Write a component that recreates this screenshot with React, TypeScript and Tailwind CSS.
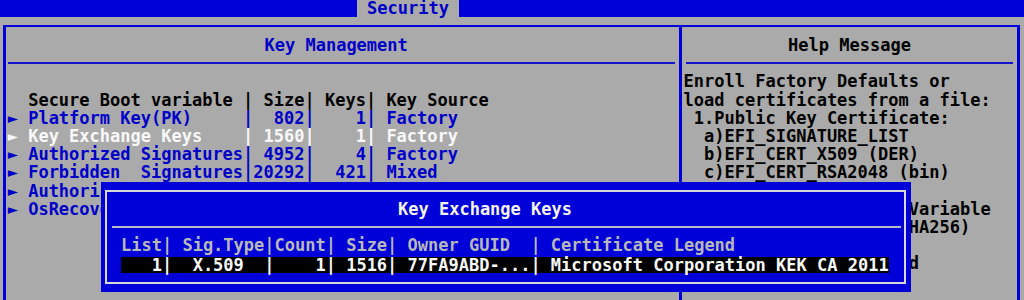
const keyRows = [
  { name: 'Platform Key(PK)', size: '802', keys: '1', source: 'Factory' },
  { name: 'Key Exchange Keys', size: '1560', keys: '1', source: 'Factory', selected: true },
  { name: 'Authorized Signatures', size: '4952', keys: '4', source: 'Factory' },
  { name: 'Forbidden  Signatures', size: '20292', keys: '421', source: 'Mixed' },
  { name: 'Authorized TimeStamps', size: '0', keys: '0', source: 'No Keys' },
  { name: 'OsRecovery Signatures', size: '0', keys: '0', source: 'No Keys' },
];

const helpLines = [
  'Enroll Factory Defaults or',
  'load certificates from a file:',
  ' 1.Public Key Certificate:',
  '  a)EFI_SIGNATURE_LIST',
  '  b)EFI_CERT_X509 (DER)',
  '  c)EFI_CERT_RSA2048 (bin)',
  '  d)EFI_CERT_SHA256',
  ' 2.Authenticated UEFI Variable',
  ' 3.EFI PE/COFF Image(SHA256)',
  'Key Source:',
  ' Factory,Mixed,Modified',
];

function Underline({ className }: { className: string }) {
  return (
    <div className="flex h-[18.2px] items-center">
      <div className={`h-[2px] flex-1 bg-[#1414cc] ${className}`} />
    </div>
  );
}

export default function App() {
  return (
    <div className="relative h-[300px] w-[1024px] overflow-hidden bg-[#aaaaaa] font-['DejaVu_Sans_Mono',monospace] text-[17px] font-bold leading-[18.2px]">
      {/* Menu bar */}
      <div className="flex h-[17px] bg-[#0000d8]">
        <div className="ml-[357px] flex w-[102px] items-center justify-center bg-[#aaaaaa] leading-[17px] text-[#0000c8]">
          Security
        </div>
      </div>

      {/* Main frame */}
      <div className="mt-[8px] ml-[3px] mr-[4px] flex h-[290px] border-x-[3px] border-t-2 border-[#0000d8]">
        {/* Key Management */}
        <div className="w-[673px] pt-[9px]">
          <div className="pl-[258.5px] text-[#0000c8]">Key Management</div>
          <Underline className="ml-[2px] mr-[4px]" />
          <div className="h-[18.2px]" />
          <div className="whitespace-pre pl-[1.7px]">
            <div className="text-black">{'  Secure Boot variable | Size| Keys| Key Source'}</div>
            {keyRows.map((r) => (
              <div key={r.name} className={r.selected ? 'text-[#f8f8f8]' : 'text-[#0000c8]'}>
                {'\u25BA ' + r.name.padEnd(21) + '|' + r.size.padStart(5) + '|' + r.keys.padStart(5) + '| ' + r.source}
              </div>
            ))}
          </div>
        </div>

        {/* Help Message */}
        <div className="flex-1 border-l-[3px] border-[#0000d8] pt-[9px]">
          <div className="text-center text-black">Help Message</div>
          <Underline className="ml-[4px] mr-[4px]" />
          <div className="whitespace-pre pl-[1.6px] text-black">
            {helpLines.map((l, i) => (
              <div key={i}>{l}</div>
            ))}
          </div>
        </div>
      </div>

      {/* Popup */}
      <div className="absolute left-[101px] top-[182px] h-[110px] w-[810px] bg-[#0000d8] pt-[8px] pl-[4px] pr-[5px] pb-[8px]">
        <div className="h-full border-2 border-[#d8d8d8]">
          <div className="pt-[7.6px] pl-[291px] text-[#f4f4f4]">Key Exchange Keys</div>
          <div className="flex h-[18.2px] items-center">
            <div className="ml-[5px] mr-[3px] h-[2px] flex-1 bg-[#b8b8c8]" />
          </div>
          <div className="whitespace-pre pl-[14px] text-[#b8b8b8]">
            {'List| Sig.Type|Count| Size| Owner GUID  | Certificate Legend'}
          </div>
          <div className="h-[18.2px] pl-[14px]">
            <span className="mt-[2.5px] inline-block h-[16px] whitespace-pre bg-black leading-[16px] text-[#f8f8f8]">
              {'   1|  X.509  |    1| 1516| 77FA9ABD-...| Microsoft Corporation KEK CA 2011'}
            </span>
          </div>
        </div>
      </div>
    </div>
  );
}
